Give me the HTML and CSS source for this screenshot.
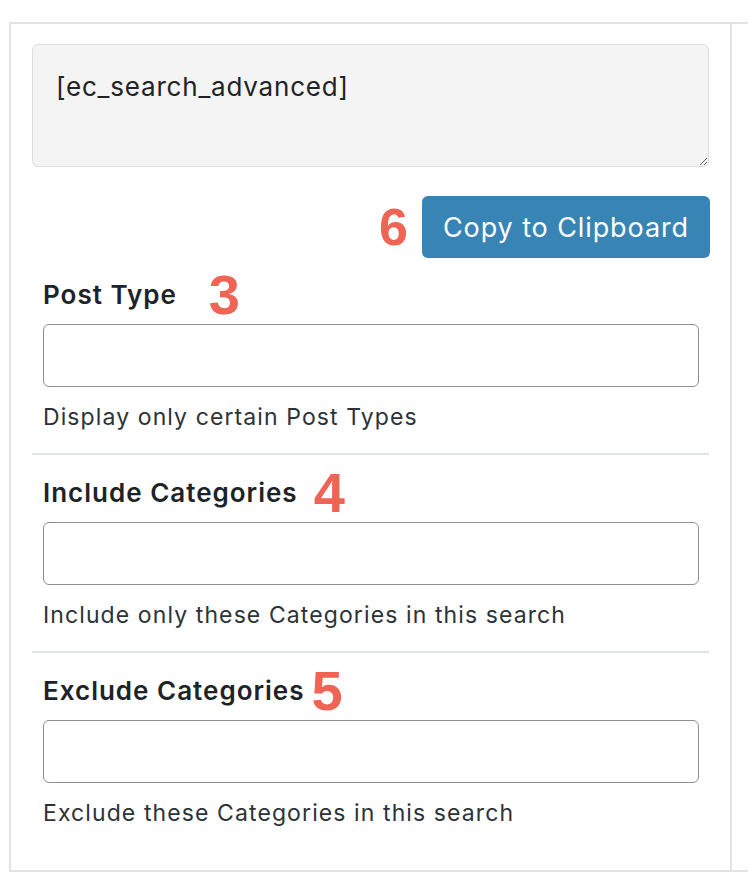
FILE: index.html
```html
<!DOCTYPE html>
<html lang="en">
<head>
  <meta charset="UTF-8">
  <title>Shortcode Builder</title>
  <link rel="stylesheet" href="styles.css">
</head>
<body>
  <div class="panel">
    <div class="col">
      <!-- Shortcode generado -->
      <textarea class="shortcode" readonly>[ec_search_advanced]</textarea>

      <div class="copy-row">
        <span class="step step-6">6</span>
        <button type="button" class="btn">Copy to Clipboard</button>
      </div>

      <div class="field">
        <label class="field-label" for="post_type">Post Type<span class="step step-3">3</span></label>
        <input type="text" id="post_type" class="field-input">
        <p class="field-help">Display only certain Post Types</p>
      </div>

      <div class="field">
        <label class="field-label" for="include_cats">Include Categories<span class="step step-4">4</span></label>
        <input type="text" id="include_cats" class="field-input">
        <p class="field-help">Include only these Categories in this search</p>
      </div>

      <div class="field field-last">
        <label class="field-label" for="exclude_cats">Exclude Categories<span class="step step-5">5</span></label>
        <input type="text" id="exclude_cats" class="field-input">
        <p class="field-help">Exclude these Categories in this search</p>
      </div>
    </div>
  </div>
</body>
</html>
```

FILE: styles.css
```css
/* Panel del generador de shortcode */
body {
  margin: 0;
  font-family: Inter, "Noto Sans", sans-serif;
  background: #fff;
  color: #1d2327;
  overflow: hidden;
}
.panel {
  margin: 22px 0 0 9px;
  border: 2px solid #e0e4e8;
  border-right: none;
  display: flex;
}
.col {
  width: 677px;
  padding: 20px 21px 0 21px;
  border-right: 2px solid #e0e4e8;
}
.shortcode {
  display: block;
  box-sizing: border-box;
  width: 100%;
  height: 123px;
  margin: 0;
  padding: 24px 23px 10px;
  font-family: Inter, "Noto Sans", sans-serif;
  font-size: 26px;
  line-height: 36px;
  letter-spacing: 0.8px;
  color: #1d2327;
  background: #f4f4f4;
  border: 1px solid #dcdee2;
  border-radius: 6px;
  resize: vertical;
  outline: none;
}
.copy-row {
  display: flex;
  justify-content: flex-end;
  align-items: center;
  gap: 14px;
  margin-top: 29px;
}
.btn {
  height: 62px;
  width: 288px;
  margin-right: -1px;
  padding: 0;
  border: none;
  border-radius: 6px;
  background: #3884b4;
  color: #fff;
  font-family: Inter, "Noto Sans", sans-serif;
  font-size: 27px;
  letter-spacing: 0.9px;
  cursor: pointer;
}
/* Numeros rojos de anotacion */
.step {
  display: inline-block;
  font-family: "Liberation Sans", Arial, sans-serif;
  font-weight: bold;
  color: #ef6455;
  font-size: 56px;
  letter-spacing: 0;
  height: 32px;
  line-height: 32px;
}
.step-6 {
  font-size: 52px;
  height: auto;
  line-height: 1;
}
.step-3 { margin-left: 32px; }
.step-4 { margin-left: 16px; }
.step-5 { margin-left: 7px; }

.field {
  padding: 21px 10px 21px 11px;
  border-bottom: 2px solid #e0e4e8;
}
.field + .field {
  padding-top: 22px;
}
.field-last {
  border-bottom: none;
  padding-bottom: 42px;
}
.field-label {
  display: flex;
  align-items: flex-start;
  font-size: 26px;
  font-weight: 600;
  letter-spacing: 1px;
  line-height: 32px;
  height: 32px;
}
.field-input {
  display: block;
  box-sizing: border-box;
  width: 100%;
  height: 63px;
  margin: 13px 0 0;
  padding: 0 12px;
  border: 1px solid #8c8f94;
  border-radius: 6px;
  font-size: 22px;
  background: #fff;
}
.field-help {
  margin: 15px 0 0;
  font-size: 23px;
  line-height: 30px;
  letter-spacing: 1.1px;
  color: #2c3338;
}
```
